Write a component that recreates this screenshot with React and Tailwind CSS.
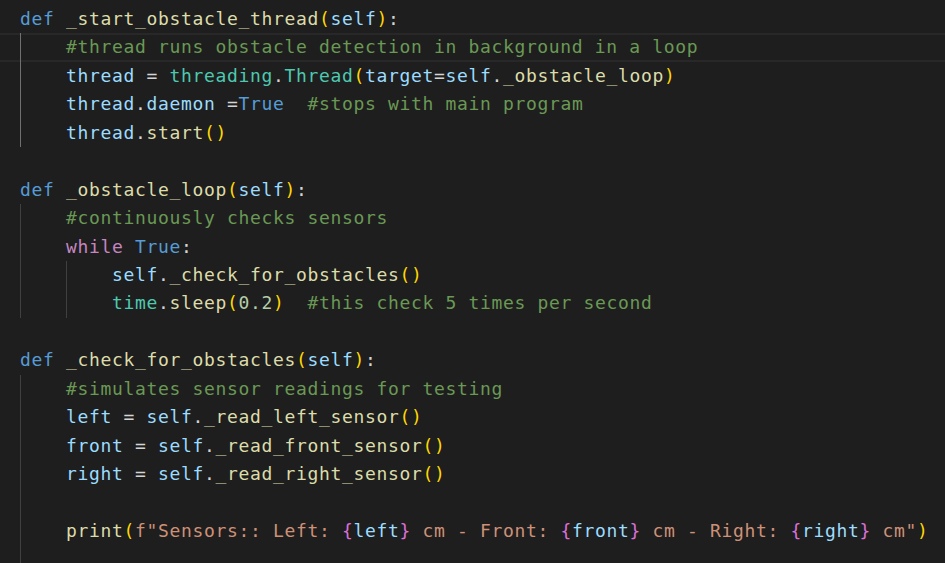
const kw = 'text-[#569cd6]'
const fn = 'text-[#dcdcaa]'
const vr = 'text-[#9cdcfe]'
const cls = 'text-[#4ec9b0]'
const cm = 'text-[#6a9955]'
const ctl = 'text-[#c586c0]'
const num = 'text-[#b5cea8]'
const str = 'text-[#ce9178]'
const b1 = 'text-[#ffd700]'
const b2 = 'text-[#da70d6]'
const op = 'text-[#d4d4d4]'

// [guides, tokens, highlighted]
const lines = [
  [[], [['def', kw], [' '], ['_start_obstacle_thread', fn], ['(', b1], ['self', vr], [')', b1], [':', op]]],
  [['active'], [['#thread runs obstacle detection in background in a loop', cm]], true],
  [['active'], [['thread', vr], [' = '], ['threading', cls], ['.'], ['Thread', cls], ['(', b1], ['target', vr], ['='], ['self', vr], ['.'], ['_obstacle_loop', fn], [')', b1]]],
  [['active'], [['thread', vr], ['.'], ['daemon', vr], [' ='], ['True', kw], ['  '], ['#stops with main program', cm]]],
  [['active'], [['thread', vr], ['.'], ['start', fn], ['()', b1]]],
  [[], []],
  [[], [['def', kw], [' '], ['_obstacle_loop', fn], ['(', b1], ['self', vr], [')', b1], [':', op]]],
  [['g'], [['#continuously checks sensors', cm]]],
  [['g'], [['while', ctl], [' '], ['True', kw], [':']]],
  [['g', 'g'], [['self', vr], ['.'], ['_check_for_obstacles', fn], ['()', b1]]],
  [['g', 'g'], [['time', cls], ['.'], ['sleep', fn], ['(', b1], ['0.2', num], [')', b1], ['  '], ['#this check 5 times per second', cm]]],
  [[], []],
  [[], [['def', kw], [' '], ['_check_for_obstacles', fn], ['(', b1], ['self', vr], [')', b1], [':', op]]],
  [['g'], [['#simulates sensor readings for testing', cm]]],
  [['g'], [['left', vr], [' = '], ['self', vr], ['.'], ['_read_left_sensor', fn], ['()', b1]]],
  [['g'], [['front', vr], [' = '], ['self', vr], ['.'], ['_read_front_sensor', fn], ['()', b1]]],
  [['g'], [['right', vr], [' = '], ['self', vr], ['.'], ['_read_right_sensor', fn], ['()', b1]]],
  [['g'], []],
  [['g'], [
    ['print', fn], ['(', b1], ['f"Sensors:: Left: ', str], ['{', b2], ['left', vr], ['}', b2],
    [' cm - Front: ', str], ['{', b2], ['front', vr], ['}', b2],
    [' cm - Right: ', str], ['{', b2], ['right', vr], ['}', b2], [' cm"', str], [')', b1],
  ]],
  [['g'], []],
]

function Line({ guides, tokens, active }) {
  return (
    <div className={`flex h-[28.44px] ${active ? 'shadow-[inset_0_2px_0_#282828,inset_0_-2px_0_#282828]' : ''}`}>
      {guides.map((g, i) => (
        <span
          key={i}
          className={`w-[46px] shrink-0 border-l ${g === 'active' ? 'border-[#707070]' : 'border-[#404040]'}`}
        />
      ))}
      <span className="whitespace-pre leading-[28.44px]">
        {tokens.map(([t, c], i) => (
          <span key={i} className={c || op}>{t}</span>
        ))}
      </span>
    </div>
  )
}

export default function App() {
  return (
    <div className="h-screen overflow-hidden bg-[#1e1e1e] pt-[5px] font-['DejaVu_Sans_Mono',monospace] text-[18px] tracking-[0.66px] text-[#d4d4d4]">
      {lines.map(([guides, tokens, active], i) => (
        <div key={i} className={`pl-[20px] ${active ? 'shadow-[inset_0_2px_0_#282828,inset_0_-2px_0_#282828]' : ''}`}>
          <Line guides={guides} tokens={tokens} />
        </div>
      ))}
    </div>
  )
}
